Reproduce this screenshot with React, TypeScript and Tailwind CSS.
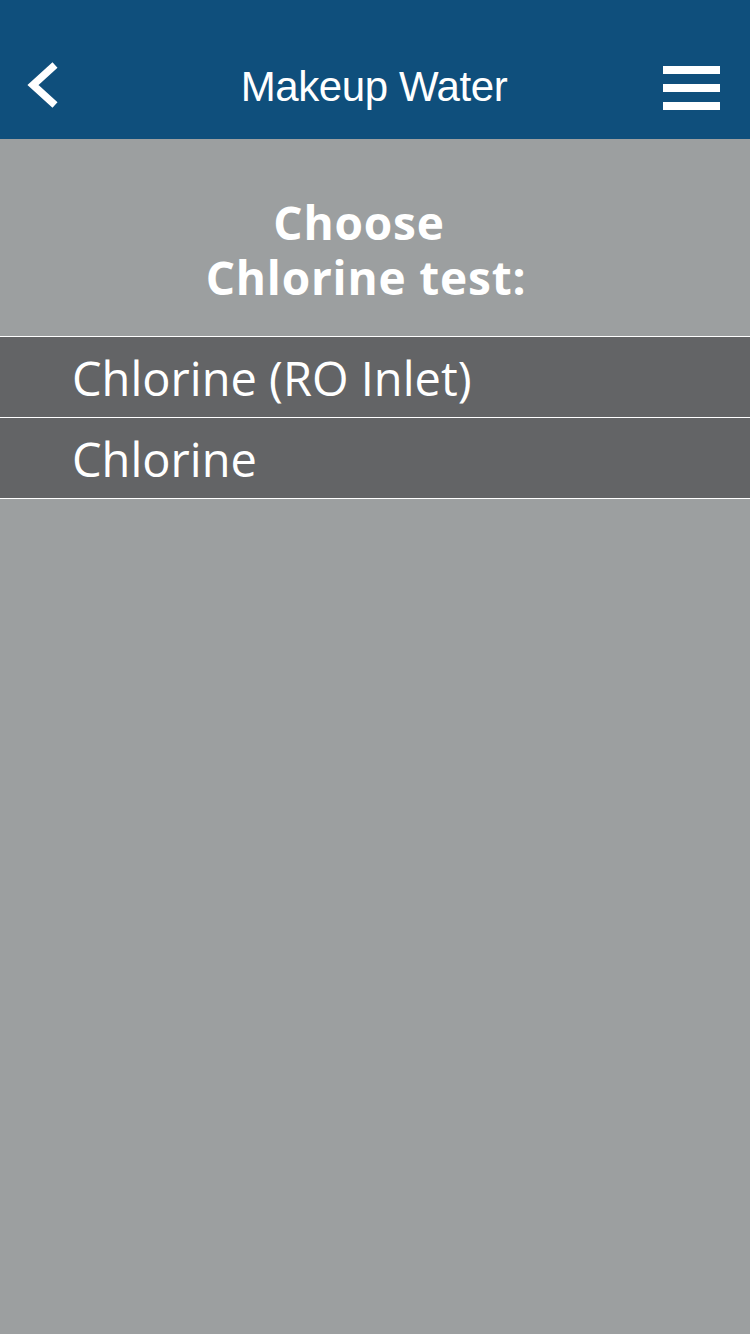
import React from "react";

export default function App() {
  const items = ["Chlorine (RO Inlet)", "Chlorine"];
  return (
    <div className="w-[750px] h-[1334px] bg-[#9c9fa0] flex flex-col overflow-hidden">
      <div className="h-[139px] bg-[#0f4f7c] relative flex items-end pb-[31px] justify-center">
        <div className="absolute left-[24px] top-[62px]">
          <svg width="38" height="46" viewBox="0 0 38 46">
            <polyline points="31,3 9,23 31,43" fill="none" stroke="white" strokeWidth="7.5" strokeLinecap="butt" strokeLinejoin="miter" />
          </svg>
        </div>
        <span className="text-white text-[42px] leading-none tracking-[-0.4px] pr-[2px]" style={{ fontFamily: '"Liberation Sans", Arial, sans-serif' }}>
          Makeup Water
        </span>
        <div className="absolute left-[663px] top-[66px] flex flex-col gap-[10px]">
          <div className="w-[57px] h-[8px] bg-white" />
          <div className="w-[57px] h-[8px] bg-white" />
          <div className="w-[57px] h-[8px] bg-white" />
        </div>
      </div>
      <div className="h-[198px] flex flex-col items-center pt-[60px] pr-[18px] border-b border-white">
        <div className="flex flex-col items-center gap-[9px] text-white font-bold text-[46px] leading-none tracking-[0.8px] text-center" style={{ fontFamily: '"Open Sans", "Noto Sans", sans-serif' }}>
          <div className="-ml-[14px]">Choose</div>
          <div>Chlorine test:</div>
        </div>
      </div>
      {items.map((t) => (
        <div key={t} className="h-[81px] bg-[#636466] border-b border-white flex items-center pl-[72px] pt-[2px]">
          <span className="text-white text-[47px] leading-none" style={{ fontFamily: '"Open Sans", "Noto Sans", sans-serif' }}>{t}</span>
        </div>
      ))}
    </div>
  );
}
